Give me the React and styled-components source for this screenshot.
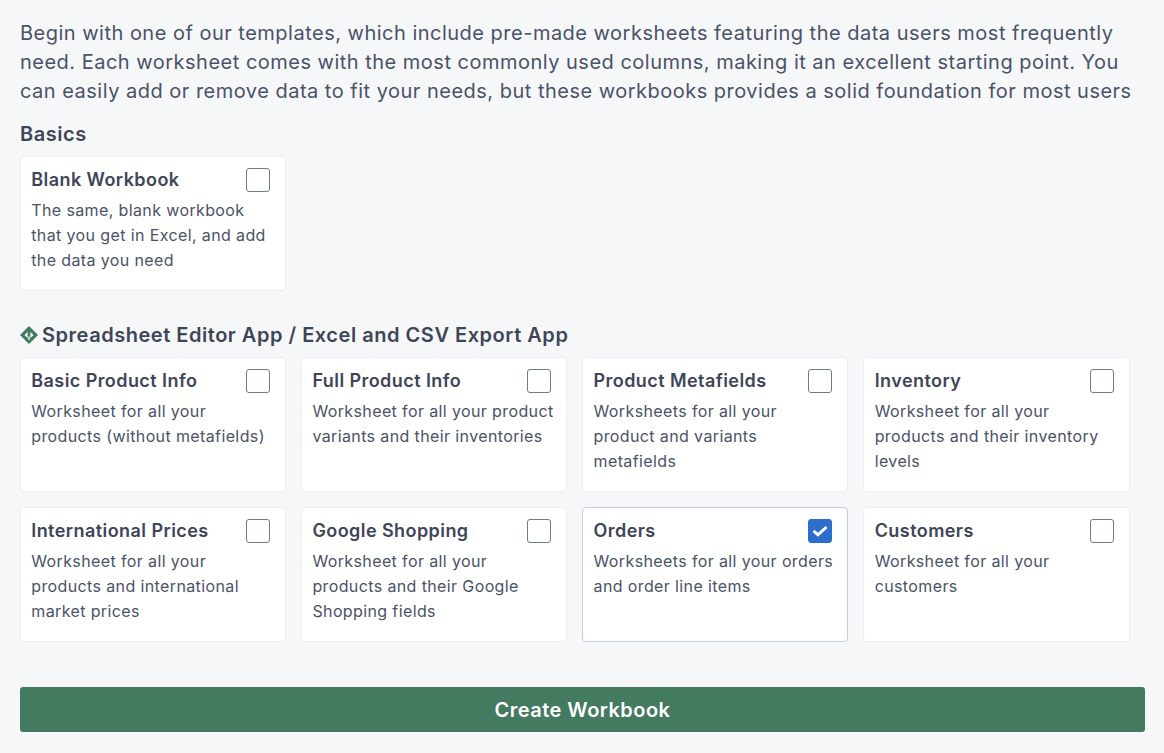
import styled, { createGlobalStyle } from "styled-components";

const GlobalStyle = createGlobalStyle`
  html, body {
    margin: 0;
    background: #f6f7f9;
    font-family: Inter, "Liberation Sans", sans-serif;
    color: #3f4759;
  }
`;

const Page = styled.div`
  width: 1164px;
  height: 753px;
  box-sizing: border-box;
  padding: 19px 19px 0 20px;
  overflow: hidden;
`;

const Intro = styled.p`
  margin: 0;
  font-size: 20px;
  line-height: 29px;
  letter-spacing: 0.49px;
  color: #4a5268;
`;

const SectionTitle = styled.h2`
  display: flex;
  align-items: center;
  gap: 4px;
  margin: ${(p) => p.$top}px 0 8px;
  font-size: 20px;
  line-height: 28px;
  font-weight: 600;
  letter-spacing: 0.53px;
  color: #3e4558;
`;

const Grid = styled.div`
  display: grid;
  grid-template-columns: repeat(3, 266px) 266.55px;
  gap: 15px 15.15px;
`;

const Card = styled.div`
  box-sizing: border-box;
  height: 135px;
  padding: 10px 10px 0 10.25px;
  background: #fff;
  border: 1px solid ${(p) => (p.$selected ? "#c0d0e2" : "#eceef1")};
  border-radius: 4px;
`;

const CardHead = styled.div`
  display: flex;
  justify-content: space-between;
  align-items: flex-start;
  height: 25px;
`;

const CardTitle = styled.div`
  font-size: 18px;
  line-height: 25px;
  font-weight: 600;
  letter-spacing: 0.43px;
  color: #3e4558;
`;

const Check = styled.span`
  display: flex;
  align-items: center;
  justify-content: center;
  box-sizing: border-box;
  flex: none;
  width: 24px;
  height: 24px;
  margin: 1px 5px 0 0;
  border: 1.5px solid ${(p) => (p.$on ? "#2c6ecb" : "#6f7a8d")};
  border-radius: 3px;
  background: ${(p) => (p.$on ? "#2c6ecb" : "#fff")};
`;

const CardText = styled.p`
  margin: 6px 0 0;
  font-size: 16px;
  line-height: 25px;
  letter-spacing: 0.38px;
  color: #4a5268;
`;

const CreateButton = styled.button`
  display: block;
  width: 1125px;
  height: 45px;
  margin-top: 45px;
  padding: 0;
  border: 0;
  border-radius: 3px;
  background: #437a60;
  color: #fff;
  font-family: inherit;
  font-size: 20px;
  font-weight: 600;
  letter-spacing: 0.47px;
`;

const basics = [
  {
    title: "Blank Workbook",
    text: "The same, blank workbook that you get in Excel, and add the data you need",
  },
];

const templates = [
  { title: "Basic Product Info", text: "Worksheet for all your products (without metafields)" },
  { title: "Full Product Info", text: "Worksheet for all your product variants and their inventories" },
  { title: "Product Metafields", text: "Worksheets for all your product and variants metafields" },
  { title: "Inventory", text: "Worksheet for all your products and their inventory levels" },
  { title: "International Prices", text: "Worksheet for all your products and international market prices" },
  { title: "Google Shopping", text: "Worksheet for all your products and their Google Shopping fields" },
  { title: "Orders", text: "Worksheets for all your orders and order line items", selected: true },
  { title: "Customers", text: "Worksheet for all your customers" },
];

const AppIcon = () => (
  <svg width="18" height="18" viewBox="0 0 18 18">
    <path d="M9 0 18 9 9 18 0 9Z" fill="#437a60" />
    <path d="M4.4 9 7.6 6V12ZM13.6 9 10.4 6V12Z" fill="#fff" />
    <path d="M8.3 10.5h1.4v3.5H8.3Z" fill="#fff" />
  </svg>
);

const TemplateCard = ({ title, text, selected }) => (
  <Card $selected={selected}>
    <CardHead>
      <CardTitle>{title}</CardTitle>
      <Check $on={selected}>
        {selected && (
          <svg width="16" height="12" viewBox="0 0 16 12">
            <path d="M1.5 5.8 6 9.8 14.5 2" fill="none" stroke="#fff" strokeWidth="3" />
          </svg>
        )}
      </Check>
    </CardHead>
    <CardText>{text}</CardText>
  </Card>
);

const App = () => (
  <Page>
    <GlobalStyle />
    <Intro>
      Begin with one of our templates, which include pre-made worksheets featuring the data users most frequently
      need. Each worksheet comes with the most commonly used columns, making it an excellent starting point. You
      can easily add or remove data to fit your needs, but these workbooks provides a solid foundation for most users
    </Intro>
    <SectionTitle $top={14}>Basics</SectionTitle>
    <Grid>
      {basics.map((item) => (
        <TemplateCard key={item.title} {...item} />
      ))}
    </Grid>
    <SectionTitle $top={30}>
      <AppIcon />
      Spreadsheet Editor App / Excel and CSV Export App
    </SectionTitle>
    <Grid>
      {templates.map((item) => (
        <TemplateCard key={item.title} {...item} />
      ))}
    </Grid>
    <CreateButton>Create Workbook</CreateButton>
  </Page>
);

export default App;
